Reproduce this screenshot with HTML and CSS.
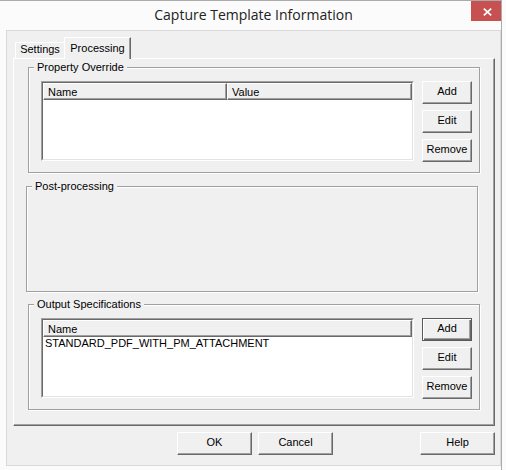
FILE: index.html
```html
<!DOCTYPE html>
<html>
<head>
<meta charset="utf-8">
<title>Capture Template Information</title>
<link rel="stylesheet" href="styles.css">
</head>
<body>
<div class="window">
  <div class="titlebar">
    <span class="title">Capture Template Information</span>
    <div class="close">
      <svg width="9" height="8" viewBox="0 0 9 8"><path d="M0.8 0.6L8.2 7.4M8.2 0.6L0.8 7.4" stroke="#fff" stroke-width="1.7" fill="none"/></svg>
    </div>
  </div>
  <div class="client">
    <div class="tabs">
      <div class="tab tab-settings">Settings</div>
      <div class="tab active">Processing</div>
    </div>
    <div class="panel">
      <div class="group g-prop">
        <span class="group-label">Property Override</span>
        <div class="lv">
          <div class="lv-inner">
            <div class="lv-header">
              <div class="lv-col col-name">Name</div>
              <div class="lv-col col-fill">Value</div>
            </div>
          </div>
        </div>
        <div class="btn-col">
          <button class="btn">Add</button>
          <button class="btn">Edit</button>
          <button class="btn">Remove</button>
        </div>
      </div>
      <div class="group g-post">
        <span class="group-label">Post-processing</span>
      </div>
      <div class="group g-out">
        <span class="group-label">Output Specifications</span>
        <div class="lv">
          <div class="lv-inner">
            <div class="lv-header">
              <div class="lv-col col-fill">Name</div>
            </div>
            <div class="lv-row">STANDARD_PDF_WITH_PM_ATTACHMENT</div>
          </div>
        </div>
        <div class="btn-col">
          <button class="btn default">Add</button>
          <button class="btn">Edit</button>
          <button class="btn">Remove</button>
        </div>
      </div>
    </div>
    <div class="footer">
      <button class="btn wide btn-ok">OK</button>
      <button class="btn wide btn-cancel">Cancel</button>
      <button class="btn wide btn-help">Help</button>
    </div>
  </div>
</div>
</body>
</html>
```

FILE: styles.css
```css
html, body {
  margin: 0;
  padding: 0;
}

body {
  width: 506px;
  height: 470px;
  overflow: hidden;
  background: #fbfbfb;
  font-family: "Liberation Sans", Arial, sans-serif;
  font-size: 11px;
  line-height: 13px;
  color: #000;
}

.window {
  width: 502px;
  height: 470px;
  box-sizing: border-box;
  border-top: 1px solid #ababab;
  border-right: 1px solid #ababab;
  display: flex;
  flex-direction: column;
}

.titlebar {
  height: 29px;
  box-sizing: border-box;
  padding-left: 6px;
  display: grid;
  grid-template-columns: 1fr auto 1fr;
  flex: none;
}

.title {
  grid-column: 2;
  font-family: "Open Sans", "Liberation Sans", sans-serif;
  font-size: 14px;
  line-height: 20px;
  padding-top: 4px;
  color: #222;
  white-space: nowrap;
}

.close {
  grid-column: 3;
  justify-self: end;
  align-self: start;
  width: 30px;
  height: 20px;
  background: #c75050;
  display: flex;
  align-items: center;
  justify-content: center;
}

.close svg {
  display: block;
  margin-left: 2px;
  margin-top: 1px;
}

.client {
  margin-left: 6px;
  width: 495px;
  height: 436px;
  box-sizing: border-box;
  border: 1px solid #d9d9d9;
  background: #f0f0f0;
  padding: 6px 0 0 6px;
  flex: none;
}

.tabs {
  display: flex;
  align-items: flex-end;
  height: 21px;
  padding-left: 2px;
  position: relative;
  z-index: 1;
}

.tab {
  box-sizing: border-box;
  height: 16px;
  border-top: 1px solid #fff;
  border-left: 1px solid #fff;
  text-align: center;
  white-space: nowrap;
  background: #f0f0f0;
}

.tab-settings {
  width: 49px;
}

.tab.active {
  width: 67px;
  height: 22px;
  margin-bottom: -1px;
  padding-top: 4px;
  border-right: 1px solid #696969;
  box-shadow: inset -1px 0 0 #a0a0a0;
}

.panel {
  width: 482px;
  height: 368px;
  box-sizing: border-box;
  border-top: 1px solid #fff;
  border-left: 1px solid #fff;
  border-right: 1px solid #696969;
  border-bottom: 1px solid #696969;
  box-shadow: inset -1px -1px 0 #a0a0a0;
  padding-top: 8px;
}

.group {
  position: relative;
  box-sizing: border-box;
  width: 452px;
  height: 106px;
  border: 1px solid #a0a0a0;
  box-shadow: 1px 1px 0 #fff, inset 1px 1px 0 #fff;
  display: flex;
  align-items: flex-start;
  gap: 8px;
  padding: 13px 7px 0 12px;
}

.g-prop {
  margin-left: 14px;
}

.g-post {
  margin-left: 12px;
  margin-top: 13px;
}

.g-out {
  margin-left: 14px;
  margin-top: 12px;
}

.group-label {
  position: absolute;
  top: -7px;
  left: 5px;
  padding: 0 3px;
  background: #f0f0f0;
  white-space: nowrap;
}

.lv {
  width: 373px;
  height: 80px;
  box-sizing: border-box;
  border: 1px solid;
  border-color: #a0a0a0 #fff #fff #a0a0a0;
  flex: none;
}

.lv-inner {
  height: 100%;
  box-sizing: border-box;
  border: 1px solid;
  border-color: #696969 #e3e3e3 #e3e3e3 #696969;
  background: #fff;
}

.lv-header {
  display: flex;
  height: 17px;
  box-sizing: border-box;
  background: #f0f0f0;
}

.lv-col {
  box-sizing: border-box;
  border-top: 1px solid #fff;
  border-left: 1px solid #fff;
  border-right: 1px solid #696969;
  border-bottom: 1px solid #696969;
  box-shadow: inset -1px -1px 0 #a0a0a0;
  padding: 2px 0 0 4px;
  white-space: nowrap;
}

.col-name {
  width: 184px;
}

.col-fill {
  flex: 1;
}

.lv-row {
  padding: 0 0 0 2px;
  white-space: nowrap;
}

.btn-col {
  display: flex;
  flex-direction: column;
  gap: 6px;
}

.btn {
  appearance: none;
  -webkit-appearance: none;
  box-sizing: border-box;
  width: 50px;
  height: 23px;
  margin: 0;
  padding: 0 0 2px;
  font: inherit;
  line-height: 13px;
  color: #000;
  background: #f0f0f0;
  border: 1px solid;
  border-color: #fff #696969 #696969 #fff;
  box-shadow: inset -1px -1px 0 #a0a0a0;
  display: flex;
  align-items: center;
  justify-content: center;
}

.btn.default {
  border-color: #5a5a5a;
  box-shadow: inset 1px 1px 0 #fff, inset -1px -1px 0 #696969, inset -2px -2px 0 #a0a0a0;
}

.footer {
  display: flex;
  margin-top: 6px;
}

.btn.wide {
  width: 75px;
}

.btn-ok {
  margin-left: 164px;
}

.btn-cancel {
  margin-left: 6px;
}

.btn-help {
  margin-left: 87px;
}
```
